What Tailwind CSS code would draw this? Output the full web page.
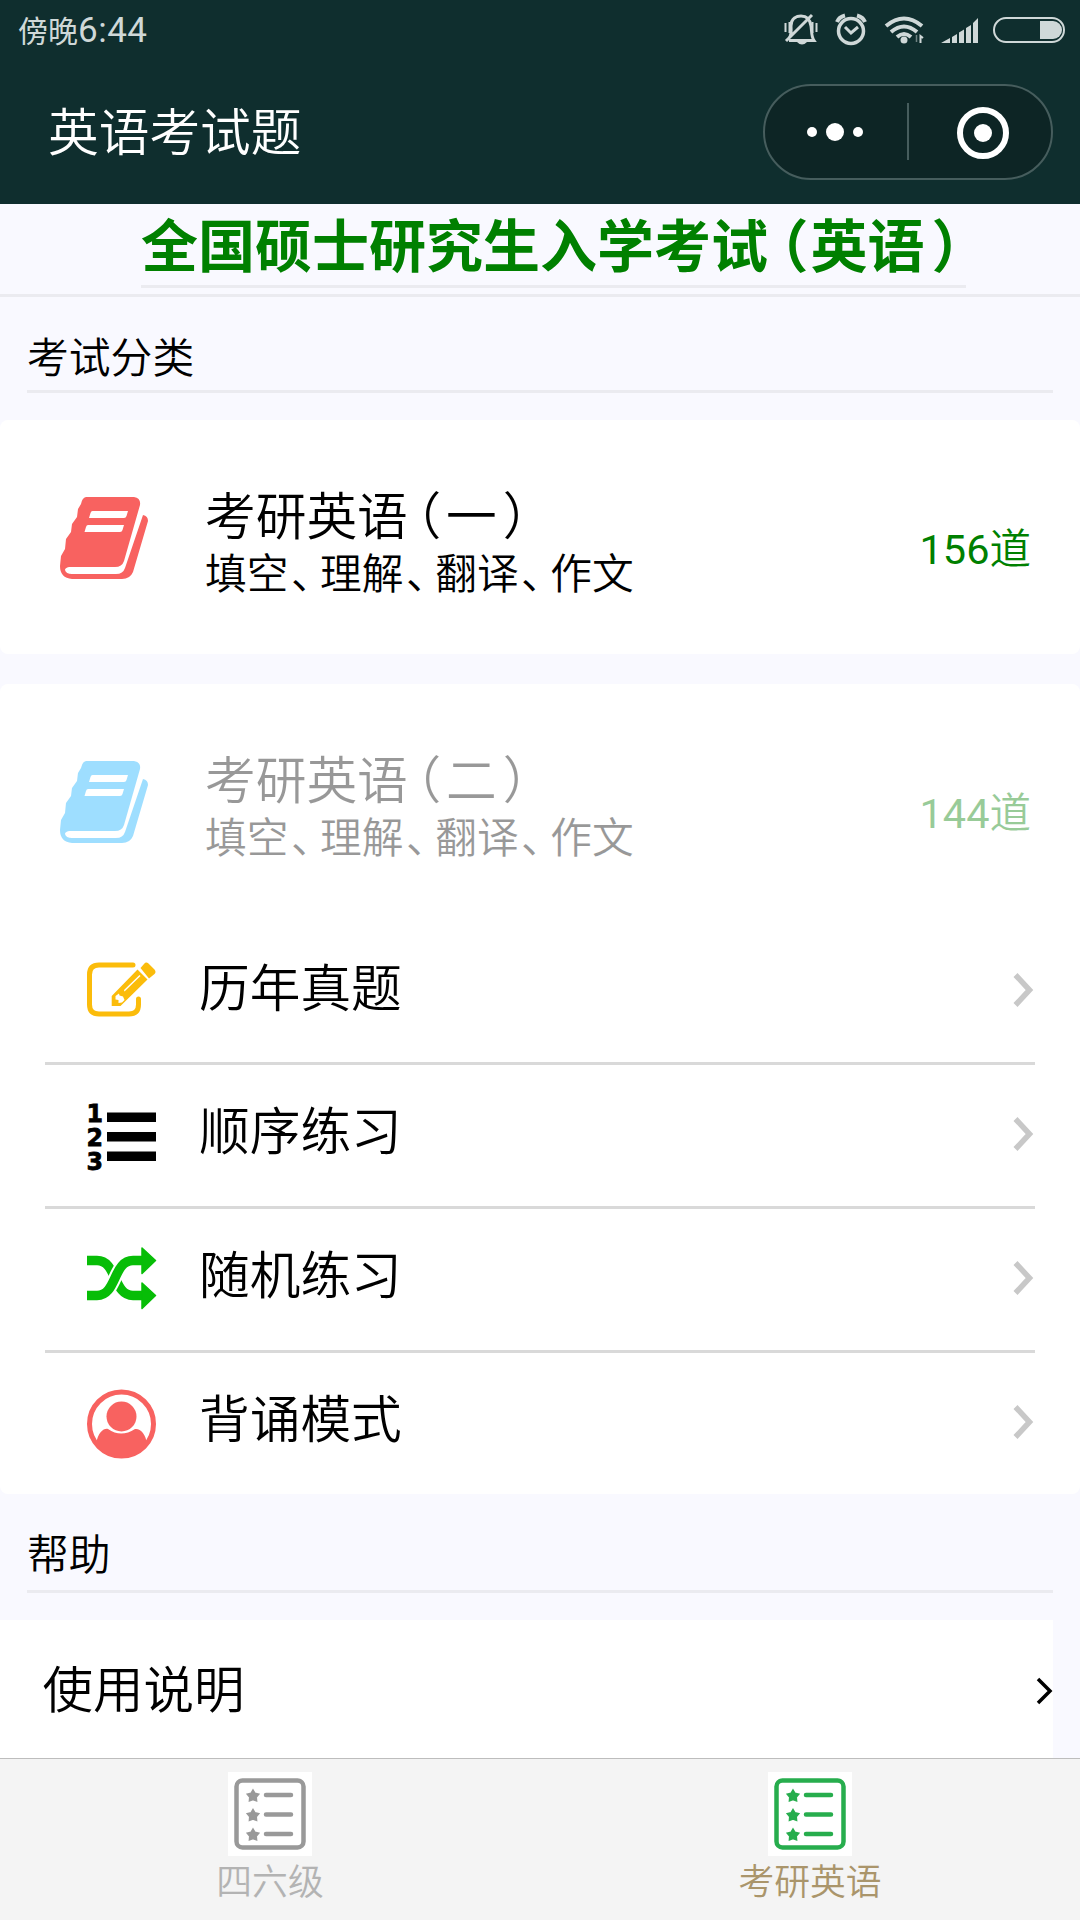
<!DOCTYPE html>
<html lang="zh-CN">
<head>
<meta charset="utf-8">
<title>英语考试题</title>
<script src="https://cdn.jsdelivr.net/npm/@tailwindcss/browser@4"></script>
</head>
<body class="w-[1080px] h-[1920px] overflow-hidden bg-[#f9f9ff] text-black font-[Roboto,'Noto_Sans_CJK_SC',sans-serif]">
<svg class="hidden">
  <symbol id="book" viewBox="0 0 90 84"><path fill="currentColor" fill-rule="evenodd" d="M27 1H75q7 1 6 8L65 65q-2 6-9 6H10q-4 1-4 3q1 4 7 4H57q7 0 9-6L84 19q5 1 5 6L74 76q-3 7-11 7H13Q1 82 1 70L2 60L6 53L7 43L12 36L13 28L18 21L19 13L22 8Q23 2 27 1ZM33.500 15Q32 15 31.500 17L30 22H65Q67 22 67.500 20L69 15ZM29 29Q27.500 29 27 31L25.500 36H61Q63 36 63.500 34L65 29Z"/></symbol>
  <symbol id="chevron" viewBox="0 0 24 36"><path d="M4.500 3L18.500 18L4.500 33" fill="none" stroke="#c8c8c8" stroke-width="5.500"/></symbol>
  <symbol id="tablist" viewBox="0 0 84 84">
    <rect x="8.500" y="8.500" width="67" height="67" rx="6" fill="none" stroke="currentColor" stroke-width="4.500"/>
    <g fill="currentColor" stroke="currentColor" stroke-width="2"><path id="st" d="M25 18.500l1.800 3 3.500.9-2.300 2.700.3 3.500-3.300-1.300-3.300 1.300.3-3.500-2.300-2.700 3.500-.9z"/><use href="#st" y="19.500"/><use href="#st" y="39"/></g>
    <path d="M38 23H63M38 42.500H63M38 62H63" stroke="currentColor" stroke-width="4.500" stroke-linecap="round"/>
  </symbol>
</svg>

<!-- Status bar and title bar -->
<header class="h-[204px] bg-[#0f2e2e]">
  <div class="h-[60px] pl-[18px] pr-[14px] flex items-center justify-between text-[#cfd8d8]">
    <div class="flex items-baseline leading-none"><span class="text-[30px]">傍晚</span><span class="text-[35px] tracking-[0.5px]">6:44</span></div>
    <svg class="w-[284px] h-[34px]" viewBox="782 13 284 34" fill="none" stroke="currentColor" stroke-width="3">
      <path d="M789 40.500H814C811 36 812 32 811 26C810 18 805 16 801 16S791 18 791 26C791 31 792 35 789 38M786 41L812 15"/>
      <path d="M785.500 23V32M789.500 22V33M812.500 22V33M816.500 23V32" stroke-width="2"/>
      <path d="M797 42H807Q802 47 797 42Z" fill="currentColor" stroke="none"/>
      <circle cx="851" cy="31" r="12.500" stroke-width="3.500"/><path d="M845 27L851 33L858 27"/><path d="M837 22Q839 17 845 15.500M857 15.500Q863 17 865 22" stroke-width="4"/>
      <path d="M886 26Q904 11 922 26M891 32Q904 21 917 32M897 37Q904 31 911 37" stroke-width="4"/><circle cx="904" cy="40" r="3.500" fill="currentColor" stroke="none"/>
      <path d="M916.500 35V42" stroke-width="1.500" opacity=".5"/><path d="M920.500 43V36L923 38" stroke-width="2"/>
      <path d="M941 43L950 38V43ZM952 37L957 34V43H952ZM959 32.500L964 29.500V43H959ZM966 28L971 25V43H966ZM973 23L978 18V43H973Z" fill="currentColor" stroke="none"/>
      <rect x="994" y="18" width="70" height="24" rx="12" stroke-width="2"/><path d="M1040 21H1053A9 9 0 0 1 1053 39H1040Z" fill="currentColor" stroke="none"/>
    </svg>
  </div>
  <div class="h-[144px] pl-[48px] pr-[27px] flex items-start justify-between">
    <h1 class="mt-[48px] text-[50.700px] leading-[51px] text-white font-[350]">英语考试题</h1>
    <svg class="w-[290px] h-[96px] mt-6" viewBox="0 0 290 96">
      <rect x="1" y="1" width="288" height="94" rx="47" fill="#0d2525" stroke="#465d5d" stroke-width="2"/>
      <path d="M145 19V76" stroke="#465d5d" stroke-width="2"/>
      <g fill="#fff"><circle cx="49" cy="48" r="5"/><circle cx="72" cy="48" r="9"/><circle cx="95" cy="48" r="5"/><circle cx="220" cy="49" r="9"/></g>
      <circle cx="220" cy="49" r="23" fill="none" stroke="#fff" stroke-width="6"/>
    </svg>
  </div>
</header>

<main class="h-[1554px] overflow-hidden">
  <div class="h-[93px] border-b-[3px] border-[#ebebf0] pl-[141px]">
    <h2 class="h-[84px] w-[825px] border-b-[3px] border-[#ebebf0] text-[57px] leading-[88px] font-bold text-[#008000] whitespace-nowrap">全国硕士研究生入学考试<span class="[font-feature-settings:'halt'] ml-[12px] mr-[2px]">（</span>英语<span class="[font-feature-settings:'halt'] ml-[7px]">）</span></h2>
  </div>
  <div class="mx-[27px] h-24 border-b-[3px] border-[#ebebf0] text-[41.800px] leading-[123px] font-[350]">考试分类</div>

  <section class="mt-[27px] h-[234px] rounded-lg bg-white flex">
    <svg class="mt-[76px] ml-[59px] w-[90px] h-[84px] text-[#f86260]"><use href="#book"/></svg>
    <div class="ml-[56px] mt-[72px] font-[350]">
      <div class="text-[50.700px] leading-[51px] whitespace-nowrap">考研英语<span class="[font-feature-settings:'halt'] ml-[8px] mr-[5px]">（</span>一<span class="[font-feature-settings:'halt'] ml-[6px]">）</span></div>
      <div class="mt-[11px] text-[41.700px] leading-[42px] whitespace-nowrap">填空<span class="[font-feature-settings:'halt'] ml-[2.500px] mr-[8.400px]">、</span>理解<span class="[font-feature-settings:'halt'] ml-[2.500px] mr-[8.400px]">、</span>翻译<span class="[font-feature-settings:'halt'] ml-[2.500px] mr-[8.400px]">、</span>作文</div>
    </div>
    <div class="ml-auto mr-[49px] mt-[109px] text-[41.500px] leading-[42px] text-[#008000]">156<span class="font-[350]">道</span></div>
  </section>

  <section class="mt-[30px] h-[810px] rounded-lg bg-white">
    <div class="h-[234px] flex opacity-40">
      <svg class="mt-[76px] ml-[59px] w-[90px] h-[84px] text-[#10afff]"><use href="#book"/></svg>
      <div class="ml-[56px] mt-[72px] font-[350]">
        <div class="text-[50.700px] leading-[51px] whitespace-nowrap">考研英语<span class="[font-feature-settings:'halt'] ml-[8px] mr-[5px]">（</span>二<span class="[font-feature-settings:'halt'] ml-[6px]">）</span></div>
        <div class="mt-[11px] text-[41.700px] leading-[42px] whitespace-nowrap">填空<span class="[font-feature-settings:'halt'] ml-[2.500px] mr-[8.400px]">、</span>理解<span class="[font-feature-settings:'halt'] ml-[2.500px] mr-[8.400px]">、</span>翻译<span class="[font-feature-settings:'halt'] ml-[2.500px] mr-[8.400px]">、</span>作文</div>
      </div>
      <div class="ml-auto mr-[49px] mt-[109px] text-[41.500px] leading-[42px] text-[#008000]">144<span class="font-[350]">道</span></div>
    </div>
    <div class="mx-[45px] font-[350] text-[50.700px]">
      <div class="h-[147px] border-b-[3px] border-[#d9d9d9] flex items-center pl-[41px]">
        <svg class="w-[72px] h-[72px]" viewBox="0 0 72 72"><path d="M47 11H13Q3.500 11 3.500 20.500V50.500Q3.500 60 13 60H43Q52.500 60 52.500 50.500V45" fill="none" stroke="#fbbc0b" stroke-width="5" stroke-linecap="round"/><path fill="#fbbc0b" fill-rule="evenodd" d="M54.500 14L58 10Q60 7.500 62.500 9.500L68.500 15.500Q70.500 18 68.500 20L63 24.500ZM51.500 15.500L61.500 25.500L34.500 52H25.700V42ZM53.500 21L38 36L38.500 37.500L54.500 22ZM29.500 42V45.500L32.500 46V49L36 48.500L38.500 46L37 42.500L33.500 41.500L33 39.500Z"/></svg>
        <span class="ml-[41px]">历年真题</span>
        <svg class="ml-auto w-6 h-9"><use href="#chevron"/></svg>
      </div>
      <div class="h-[144px] border-b-[3px] border-[#d9d9d9] flex items-center pl-[41px]">
        <svg class="w-[72px] h-[72px] overflow-visible" viewBox="0 0 72 72"><path d="M21 12.500H70V22H21ZM21 32H70V41.500H21ZM21 51.500H70V61H21Z"/><g font-family="DejaVu Sans" font-weight="700" font-size="25.500" stroke="#000" stroke-width=".8"><text x="0.500" y="21.500" textLength="16.500" lengthAdjust="spacingAndGlyphs">1</text><text x="0.500" y="46" textLength="16.500" lengthAdjust="spacingAndGlyphs">2</text><text x="0.500" y="70" textLength="16.500" lengthAdjust="spacingAndGlyphs">3</text></g></svg>
        <span class="ml-[41px] -mt-1">顺序练习</span>
        <svg class="ml-auto w-6 h-9 -mt-[3px]"><use href="#chevron"/></svg>
      </div>
      <div class="h-[144px] border-b-[3px] border-[#d9d9d9] flex items-center pl-[41px]">
        <svg class="w-[72px] h-[72px] -mt-[4px]" viewBox="0 0 72 72"><path d="M1 18.500H11C31 18.500 27 53.500 47 53.500H58" fill="none" stroke="#07bd07" stroke-width="9.500"/><path d="M11 53.500C31 53.500 27 18.500 47 18.500" fill="none" stroke="#fff" stroke-width="13.500"/><path d="M1 53.500H11C31 53.500 27 18.500 47 18.500H58" fill="none" stroke="#07bd07" stroke-width="9.500"/><path fill="#07bd07" stroke="#07bd07" stroke-width="1.500" stroke-linejoin="round" d="M56 6L69.500 18.500L56 31.500ZM56 41L69.500 53.500L56 66.500Z"/></svg>
        <span class="ml-[41px] -mt-1">随机练习</span>
        <svg class="ml-auto w-6 h-9 -mt-[3px]"><use href="#chevron"/></svg>
      </div>
      <div class="h-[141px] flex items-center pl-[41px]">
        <svg class="w-[72px] h-[72px]" viewBox="0 0 72 72"><circle cx="35.500" cy="36" r="32" fill="none" stroke="#f86260" stroke-width="5"/><circle cx="35.500" cy="28.500" r="15" fill="#f86260"/><path fill="#f86260" d="M10 56C12 44 18 40 22 41Q35 50 49 41C54 40 60 46 61 56Q50 70 35.500 70Q20 70 10 56Z"/></svg>
        <span class="ml-[41px] -mt-1">背诵模式</span>
        <svg class="ml-auto w-6 h-9 -mt-[3px]"><use href="#chevron"/></svg>
      </div>
    </div>
  </section>

  <div class="mx-[27px] h-[99px] border-b-[3px] border-[#ebebf0] text-[41.800px] leading-[123px] font-[350]">帮助</div>
  <div class="mt-[27px] w-[1053px] h-[138px] bg-white flex items-center justify-between pl-[42.500px]">
    <span class="text-[50.500px] font-[350] mt-1">使用说明</span>
    <svg class="w-[17px] h-7 mt-1" viewBox="0 0 17 28"><path d="M2 2L14 14L2 26" fill="none" stroke="#000" stroke-width="3.500"/></svg>
  </div>
</main>

<nav class="h-[162px] border-t border-[#bdbdbd] bg-[#f4f4f4] grid grid-cols-2 text-[35.800px] leading-[36px] font-[350]">
  <div class="flex flex-col items-center pt-[13px] text-[#b3b3b3]">
    <svg class="w-[84px] h-[84px] bg-white text-[#999]"><use href="#tablist"/></svg>
    <span class="mt-[9px]">四六级</span>
  </div>
  <div class="flex flex-col items-center pt-[13px] text-[#aa956b]">
    <svg class="w-[84px] h-[84px] bg-white text-[#27ad4d]"><use href="#tablist"/></svg>
    <span class="mt-[9px]">考研英语</span>
  </div>
</nav>
</body>
</html>
